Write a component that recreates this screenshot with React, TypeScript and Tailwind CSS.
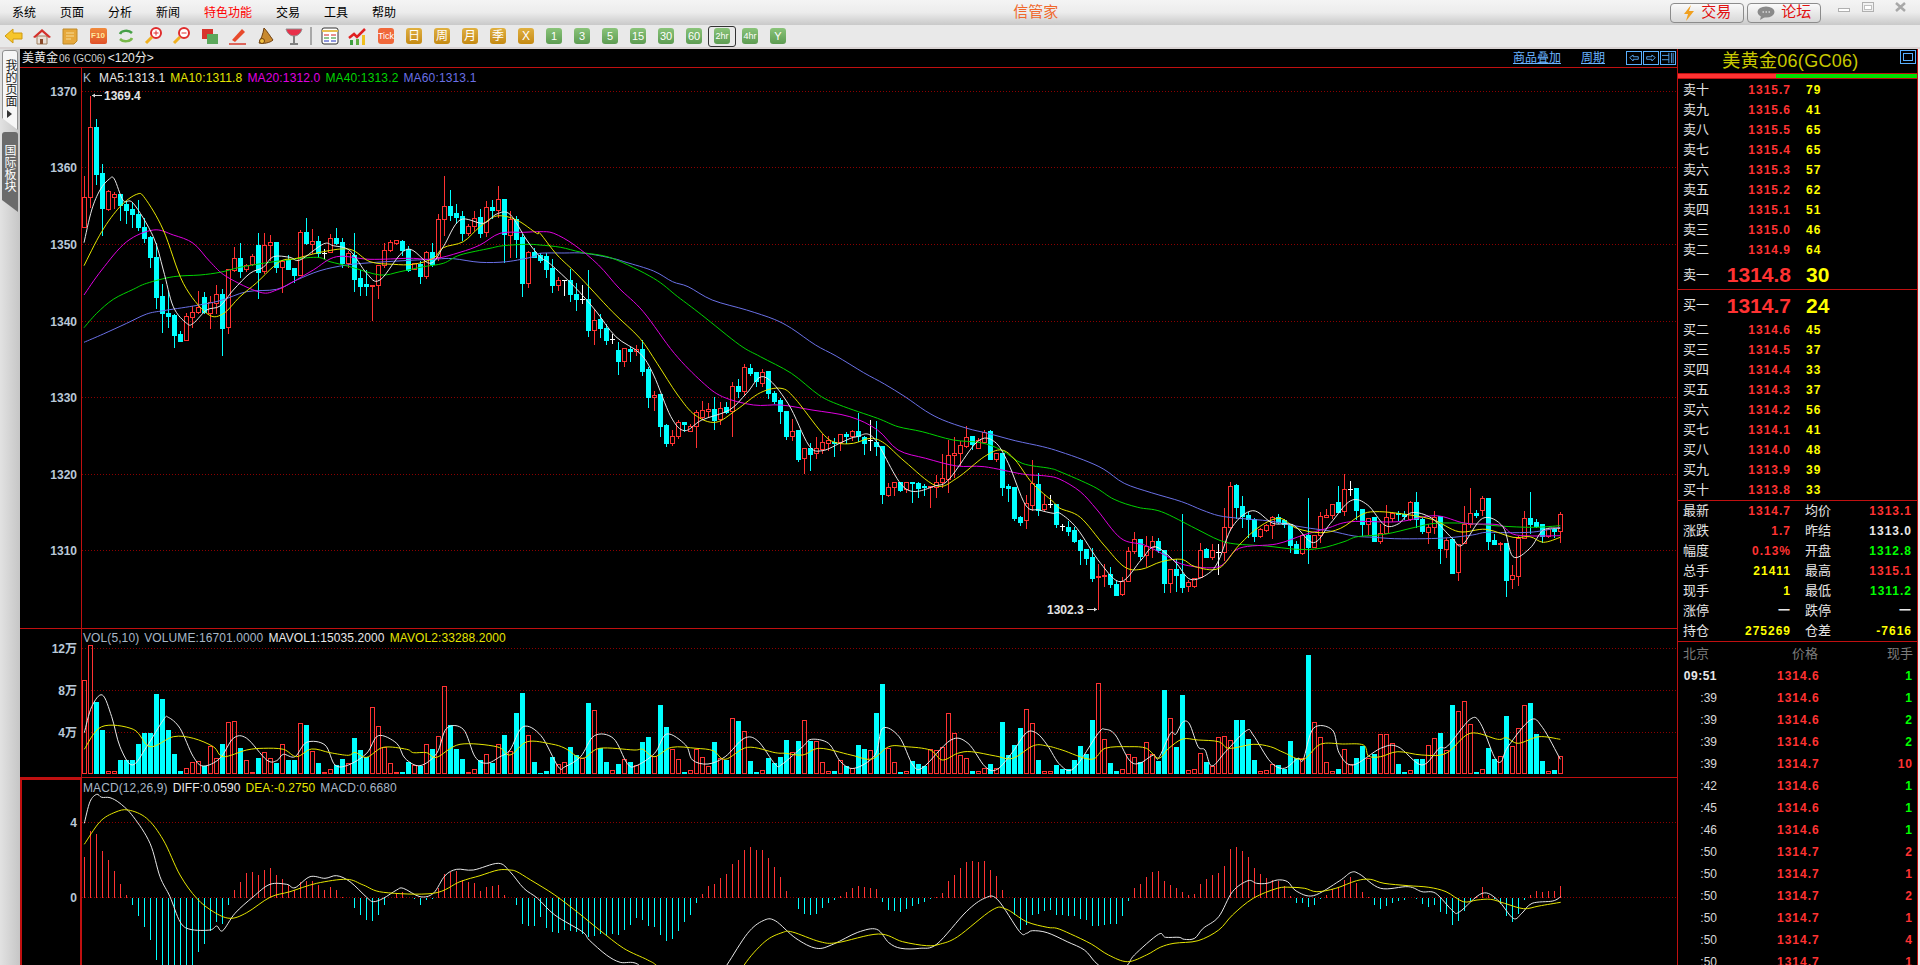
import type { ReactNode } from 'react'

// ---- chart data, read off the picture: [x, y] pairs per zoom section, converted to page px
type Pt = [number, number]
const sec7 = (a: number[]) => conv(a, 60, 3, 60)
const sec8 = (a: number[]) => conv(a, 540, 2.904, 220)
const sec9 = (a: number[]) => conv(a, 1060, 2.958, 420)
const secV6 = (a: number[]) => conv(a, 0, 3, 610)
const secV10 = (a: number[]) => conv(a, 510, 2.904, 640)
const secV11 = (a: number[]) => conv(a, 1050, 2.904, 640)

function conv(a: number[], x0: number, xs: number, y0: number): Pt[] {
  const out: Pt[] = []
  for (let i = 0; i < a.length; i += 2) out.push([x0 + a[i] / xs, y0 + a[i + 1] / 3])
  return out
}

// smooth line through the points
function linePath(pts: Pt[]) {
  let d = `M${pts[0][0].toFixed(1)} ${pts[0][1].toFixed(1)}`
  for (let i = 0; i < pts.length - 1; i++) {
    const p0 = pts[Math.max(0, i - 1)]
    const p1 = pts[i]
    const p2 = pts[i + 1]
    const p3 = pts[Math.min(pts.length - 1, i + 2)]
    const c1x = p1[0] + (p2[0] - p0[0]) / 6
    const c1y = p1[1] + (p2[1] - p0[1]) / 6
    const c2x = p2[0] - (p3[0] - p1[0]) / 6
    const c2y = p2[1] - (p3[1] - p1[1]) / 6
    d += `C${c1x.toFixed(1)} ${c1y.toFixed(1)} ${c2x.toFixed(1)} ${c2y.toFixed(1)} ${p2[0].toFixed(1)} ${p2[1].toFixed(1)}`
  }
  return d
}

const ma60 = [
  ...sec7([72,847,130,822,200,790,260,762,310,752,400,738,480,722,560,695,650,688,710,660,780,632,860,615,950,607,1050,601,1130,597,1180,596,1260,607,1340,605,1420,590]),
  ...sec8([0,100,70,99,130,100,210,115,250,127,330,153,385,185,430,200,500,240,600,270,680,298,730,325,800,375,860,408,940,458,1000,492,1060,530,1120,573,1170,600,1240,625,1300,640,1380,662,1460,680]),
  ...sec9([0,95,70,120,130,148,190,190,270,218,360,245,420,270,470,287,530,295,620,303,680,315,740,325,800,333,870,348,930,352,990,356,1080,356,1150,353,1220,345,1260,337,1320,338,1400,336,1480,322]),
]
const ma40 = [
  ...sec7([72,803,110,760,160,718,220,688,260,670,340,650,420,645,480,637,540,622,610,610,680,600,770,592,810,605,870,620,960,645,1020,635,1090,620,1150,610,1200,585,1290,565,1330,557,1400,553]),
  ...sec8([0,75,60,82,120,97,210,115,330,175,400,230,470,285,580,375,640,410,730,460,810,525,870,555,980,595,1040,620,1110,635,1200,660,1280,668,1340,690,1400,730,1480,745]),
  ...sec9([0,155,100,200,160,238,230,262,300,275,400,325,470,360,520,372,610,378,700,388,770,385,840,365,880,350,960,343,1050,322,1110,310,1200,310,1300,318,1400,322,1480,317]),
]
const ma20 = [
  ...sec7([72,705,125,630,200,545,280,510,340,525,400,550,450,605,500,650,600,697,650,690,700,665,760,630,830,590,930,598,1050,595,1120,597,1200,577,1260,555,1320,520,1390,517]),
  ...sec8([0,35,40,40,100,75,170,135,230,205,300,275,390,400,470,485,530,530,620,555,700,555,790,570,900,590,980,630,1040,690,1120,715,1210,738,1290,740,1400,762,1470,768]),
  ...sec9([0,178,60,215,110,270,180,355,250,375,310,405,370,435,470,440,530,385,640,372,720,345,790,325,860,305,1000,305,1110,287,1200,310,1300,315,1350,345,1480,347]),
]
const ma10 = [
  ...sec7([72,617,125,515,180,440,230,403,255,415,310,510,370,670,440,760,487,763,540,710,590,668,640,620,670,600,710,595,790,575,870,568,930,605,1000,613,1060,613,1120,595,1150,563,1210,545,1260,500,1310,468,1370,480,1430,520]),
  ...sec8([0,40,50,105,110,165,210,275,290,355,340,430,400,525,450,585,510,607,570,570,640,518,700,505,740,535,820,640,860,668,910,670,960,655,1000,670,1060,725,1150,797,1210,775,1290,710,1340,690,1380,720,1430,790,1490,845]),
  ...sec9([0,265,60,292,130,375,190,440,240,448,300,425,360,418,400,440,470,445,530,375,590,320,650,295,700,325,770,338,830,325,890,285,930,275,1000,280,1100,298,1180,335,1260,328,1340,352,1390,350,1430,367,1480,352]),
]
const ma5 = [
  ...sec7([72,548,95,450,120,390,148,357,163,357,190,422,220,430,280,530,310,630,340,740,380,790,400,790,440,750,480,738,520,690,570,640,610,622,640,590,690,592,720,600,790,552,820,557,870,572,920,640,960,660,1040,568,1110,610,1150,560,1200,480,1270,490,1310,462,1350,463,1400,540]),
  ...sec8([0,110,30,132,100,200,160,270,220,350,290,400,330,465,380,590,420,632,470,600,550,570,600,520,650,470,720,550,780,675,820,692,880,665,920,650,970,655,1060,805,1150,797,1190,775,1270,665,1320,665,1360,730,1410,855,1450,870,1490,880]),
  ...sec9([0,280,50,325,120,430,180,485,240,420,280,380,340,425,385,478,440,460,470,420,510,320,570,272,630,310,690,315,750,368,800,310,860,242,910,255,960,315,1000,312,1040,278,1100,295,1160,355,1190,375,1250,295,1310,320,1340,410,1390,385,1430,330,1480,325]),
]

const mavol1 = [
  ...secV6([253,368,275,290,307,255,335,320,360,410,397,465,440,410,490,330,505,322,540,355,580,440,610,468,660,445,700,385,740,385,800,450,830,452,850,433,885,440,920,397,975,405,1005,465,1045,465,1100,430,1135,377,1190,400,1215,445,1260,467,1310,430,1340,355,1390,358,1425,440,1460,460,1500,440]),
  ...secV10([0,330,38,260,90,287,140,380,160,380,205,350,245,287,300,295,340,370,365,378,420,340,455,282,510,315,530,360,575,372,625,350,680,295,720,303,770,373,790,373,850,320,875,298,925,310,960,365,1000,385,1060,345,1082,265,1130,290,1170,375,1200,382,1280,300,1330,310,1380,380,1415,388,1460,335,1500,278,1530,280,1560,315]),
  ...secV11([30,375,70,385,140,280,160,268,190,285,230,360,260,370,300,345,315,355,350,280,365,283,385,247,405,252,430,320,450,330,470,378,510,335,570,272,590,285,640,365,680,385,720,355,735,360,765,265,820,270,840,340,880,375,960,325,1010,320,1080,375,1130,325,1155,318,1220,238,1250,250,1290,350,1310,365,1330,320,1395,240,1430,262,1482,358]),
]
const mavol2 = [
  ...secV6([253,418,305,350,400,358,450,410,520,380,580,385,640,410,670,440,740,420,790,415,850,418,890,440,935,417,990,428,1045,436,1065,427,1100,442,1150,412,1220,418,1240,428,1280,428,1310,442,1380,403,1490,410]),
  ...secV10([0,345,50,305,120,312,160,325,210,355,260,325,360,330,385,328,420,350,470,322,540,325,590,332,625,358,690,322,770,338,800,340,850,345,900,325,990,345,1050,357,1100,320,1150,320,1220,330,1255,360,1300,340,1340,335,1410,348,1460,355,1520,317,1560,318]),
  ...secV11([35,330,120,358,160,325,230,320,280,325,315,355,345,325,385,297,430,300,490,305,520,325,590,313,640,320,680,338,735,358,785,313,850,312,910,315,925,348,960,350,1010,335,1080,345,1150,340,1220,280,1300,298,1325,293,1360,310,1420,290,1482,298]),
]
const diff = [
  ...secV6([253,640,270,575,290,553,305,562,330,563,360,580,400,620,450,700,480,800,510,860,540,935,570,958,630,960,650,948,668,962,705,910,760,860,810,823,860,823,885,833,930,800,975,805,1010,797,1050,815,1100,862,1120,875,1150,865,1190,840,1210,835,1260,860,1300,850,1335,797,1370,778,1420,780,1495,760]),
  ...secV10([0,695,40,745,80,775,130,825,210,875,230,900,280,945,320,967,370,972,430,1030,590,1040,630,975,690,880,735,842,770,842,830,895,890,925,940,912,1010,877,1065,868,1100,908,1135,925,1190,925,1240,912,1325,815,1378,775,1415,778,1480,875,1500,880,1517,872,1560,878]),
  ...secV11([50,905,100,930,130,965,155,985,190,1000,225,975,245,945,315,883,335,892,375,892,390,898,420,895,445,865,490,830,530,755,575,722,600,730,630,730,660,720,690,725,715,753,765,767,840,723,875,697,900,703,960,745,1040,740,1080,755,1120,760,1170,813,1190,815,1255,760,1300,780,1345,835,1370,820,1400,790,1460,783,1483,770]),
]
const dea = [
  ...secV6([253,703,300,635,345,607,385,600,440,625,490,690,540,795,590,865,640,905,690,925,740,908,810,862,870,845,950,820,1040,808,1090,825,1150,847,1300,850,1380,815,1440,797,1495,780]),
  ...secV10([0,690,20,695,60,720,130,765,200,820,260,870,330,925,400,960,430,980,520,1060,640,1060,680,975,740,905,790,878,820,876,900,905,950,908,1070,882,1140,905,1210,917,1250,912,1300,890,1400,810,1440,807,1500,845,1560,862]),
  ...secV11([20,865,60,882,120,912,170,945,225,965,280,945,320,922,360,910,430,902,490,870,530,825,590,775,660,745,700,742,740,745,775,755,830,745,890,722,930,718,970,730,1040,737,1100,742,1150,755,1200,785,1240,780,1280,778,1320,790,1375,806,1420,798,1483,787]),
]

// candles: z colour bodyTop bodyBottom high low, in zoom units of each section
const candles7 = `72 r 410 500 345 500
90 r 202 410 105 440
108 c 202 342 175 372
126 c 340 445 310 525
144 r 394 446 388 450
162 r 402 410 392 445
180 c 403 435 403 480
198 c 432 450 420 490
216 c 447 462 425 500
234 c 462 500 418 510
252 c 500 533 470 545
270 c 530 590 525 620
288 c 590 710 545 745
306 c 708 758 670 815
324 c 758 768 690 800
342 c 765 825 760 860
360 c 822 842 810 842
378 r 768 840 755 840
396 r 755 770 735 800
414 r 740 755 690 760
432 c 712 755 693 760
450 r 725 760 705 805
468 r 703 730 672 760
486 c 703 803 685 885
505 r 628 800 628 820
523 r 595 630 558 632
541 c 595 632 546 650
559 r 615 628 608 632
577 r 588 612 580 615
595 c 556 635 517 715
613 r 556 632 517 640
631 r 546 556 522 600
649 c 546 620 544 635
667 r 602 622 602 695
685 c 600 626 582 628
703 c 624 645 620 665
721 r 517 645 506 645
739 c 517 550 470 552
757 r 544 552 505 580
775 c 544 578 525 590
793 w 578 578 565 595
811 r 535 575 518 575
829 c 535 550 500 552
847 c 546 610 530 622
865 r 580 608 570 620
883 c 585 656 517 692
901 c 655 677 628 705
919 c 672 677 628 705
937 r 674 674 674 780
955 r 614 674 614 713
973 r 570 615 546 620
991 r 546 570 538 572
1009 r 541 550 538 552
1027 c 543 570 536 585
1045 c 568 630 556 632
1063 r 610 626 606 628
1081 c 612 648 600 668
1099 r 576 648 570 655
1117 c 576 612 546 618
1135 r 478 590 460 600
1153 r 439 478 345 525
1171 c 438 465 388 480
1189 c 460 470 430 490
1207 c 468 518 450 540
1225 r 498 518 490 525
1243 r 475 498 450 510
1261 c 472 518 445 530
1279 r 442 517 420 528
1297 c 441 450 418 475
1315 r 418 450 375 470
1333 c 418 522 415 607
1351 r 478 524 450 590
1369 c 478 537 465 590
1387 c 530 668 520 707
1405 r 577 668 570 680
1423 c 576 590 560 592`

const candles8 = `2 c 105 120 96 125
18 c 107 147 95 170
36 c 145 195 115 215
53 r 181 194 168 210
71 w 180 180 180 225
88 c 180 222 145 243
106 c 222 236 185 270
123 w 236 236 192 250
141 c 237 330 148 348
158 r 300 330 265 372
176 c 297 324 280 352
193 c 323 360 310 372
210 w 357 357 338 368
228 c 390 423 362 462
245 r 385 423 385 438
263 c 387 392 378 423
280 r 388 392 372 405
297 c 388 452 358 465
315 c 447 530 437 562
332 r 525 530 510 570
350 c 522 617 522 648
367 c 615 668 610 678
385 r 647 668 628 675
402 r 607 647 598 655
419 c 607 612 607 632
437 r 617 632 610 632
454 r 577 617 568 680
472 r 570 590 540 595
489 r 567 572 547 590
507 c 567 600 528 628
524 r 565 598 542 612
541 c 562 575 543 578
559 r 499 574 483 647
576 c 498 513 474 530
594 r 441 513 430 525
611 c 445 458 428 465
628 c 457 483 452 497
646 r 455 488 445 497
664 c 454 520 454 535
681 c 520 543 510 548
698 c 540 572 530 608
716 c 572 647 572 657
733 r 632 648 595 660
750 c 630 716 630 722
768 r 685 715 685 758
785 c 685 701 665 750
803 r 685 700 648 715
820 r 667 687 640 700
838 r 661 670 645 690
856 c 665 667 650 707
873 r 643 665 640 690
890 c 643 647 632 670
907 r 634 647 628 660
925 c 633 648 575 662
942 c 650 668 645 703
960 w 660 660 598 690
977 c 666 677 600 705
994 c 677 823 677 850
1012 r 800 825 785 827
1029 r 787 800 783 825
1047 c 787 810 785 812
1064 r 787 806 785 815
1082 c 785 790 785 845
1099 c 790 803 783 832
1117 c 797 799 790 825
1134 r 797 797 797 860
1152 r 787 800 762 830
1169 r 775 787 700 800
1186 r 706 778 658 815
1204 r 700 706 648 770
1221 r 675 698 660 735
1238 r 650 677 615 680
1256 c 648 672 645 688
1273 r 660 685 650 685
1291 r 635 665 628 665
1308 c 633 716 628 716
1326 r 699 716 695 722
1343 c 700 800 695 825
1361 c 797 803 790 842
1378 c 802 893 800 900
1396 c 890 905 885 915
1413 r 850 900 822 925
1430 r 790 855 718 870
1448 c 792 870 757 885
1465 r 852 868 822 870
1482 w 851 851 822 862
1500 c 852 912 850 920`

const candles9 = `6 w 318 318 310 330
24 c 321 333 300 345
42 c 330 363 318 365
60 c 360 390 355 432
78 c 387 413 385 432
95 c 411 473 380 482
113 r 469 472 430 568
131 r 464 469 430 498
149 c 462 492 437 500
167 c 492 524 480 525
185 r 482 522 468 524
202 r 394 482 378 482
220 r 358 394 333 400
238 c 358 408 355 418
256 r 378 405 345 437
273 r 364 380 345 410
291 c 364 390 350 395
309 c 390 488 390 515
326 r 448 488 448 515
344 c 447 464 415 512
362 c 462 500 280 515
380 r 487 499 478 513
397 r 473 497 470 500
415 r 390 472 365 472
433 c 388 410 380 412
451 r 391 410 370 418
468 w 395 395 368 462
486 r 322 395 262 420
504 r 198 322 183 330
521 c 195 262 190 295
539 c 258 288 225 322
557 c 285 298 272 350
575 c 297 348 290 362
593 r 328 347 320 350
611 r 315 330 308 332
628 r 292 315 285 353
646 c 292 305 280 310
664 c 300 312 295 320
682 c 312 375 312 395
699 c 372 398 360 400
717 r 345 398 340 402
735 c 345 382 232 428
753 r 345 380 345 382
770 r 289 345 272 365
788 r 286 290 265 292
806 r 253 286 250 295
824 c 246 275 195 275
842 r 208 272 160 285
859 w 206 206 180 225
877 c 204 270 200 298
895 c 268 312 268 345
913 r 295 312 290 342
931 c 292 362 292 362
948 r 338 362 310 368
966 r 292 338 252 340
984 r 279 293 272 302
1002 c 279 283 270 300
1020 c 282 288 270 298
1037 r 246 298 240 300
1055 c 246 298 213 320
1073 c 298 332 290 340
1091 r 322 335 310 368
1108 r 290 322 270 340
1126 c 288 383 285 428
1144 r 360 386 352 410
1162 c 356 458 348 458
1179 r 372 457 372 480
1197 r 313 370 255 370
1215 r 280 313 202 322
1233 c 280 286 268 290
1250 r 235 270 225 285
1268 c 233 362 230 388
1286 c 360 372 340 372
1304 r 370 370 362 390
1321 c 370 480 370 528
1339 r 466 478 432 505
1357 r 354 467 345 495
1375 r 295 355 270 355
1393 c 295 312 213 340
1410 c 307 318 295 322
1428 c 312 348 310 365
1446 r 327 347 320 350
1464 c 327 332 322 350
1482 r 283 332 273 365`

function parseCandles(src: string, x0: number, xs: number, y0: number) {
  return src.split('\n').map((row) => {
    const [z, col, t, b, h, l] = row.trim().split(' ')
    const x = 84 + 6 * Math.round((x0 + Number(z) / xs - 84) / 6)
    const y = (v: string) => Math.round(y0 + Number(v) / 3) + 0.5
    return { x, col, top: y(t), bot: y(b), hi: y(h), lo: y(l) }
  })
}

const allCandles = [
  ...parseCandles(candles7, 60, 3, 60),
  ...parseCandles(candles8, 540, 2.904, 220),
  ...parseCandles(candles9, 1060, 2.958, 420),
]

// volume bars: + red outline, - cyan fill, in 1/3 px
const volumes = [
  280,385,-215,-133,6,6,-43,-43,-43,-91,-124,-124,-241,-226,-133,-61,-10,15,33,36,-23,82,45,-91,153,156,-79,39,3,-49,63,45,-34,87,-43,-43,150,-148,66,-34,3,12,-27,-46,30,-109,-73,-51,198,141,77,30,3,-7,-37,23,-24,87,-76,111,261,-148,-76,-46,3,12,-42,57,-33,87,-118,66,
  -183,-243,113,-36,-3,-9,-51,26,32,-81,-57,45,-213,188,-77,-36,8,-30,41,-36,24,-96,-111,52,-207,-141,72,41,-6,8,72,47,20,-96,45,-42,164,-159,126,-39,-6,8,-48,-33,-51,-102,62,-99,158,-99,96,32,6,-9,38,-24,14,-87,-75,68,-183,-270,74,32,-6,6,-39,-30,-24,72,69,77,179,119,53,44,-9,6,14,-30,14,-156,-56,-87,-138,191,149,-42,6,
  6,-27,-15,-15,-42,-84,-60,-162,270,101,-33,-9,12,56,47,-36,92,56,-39,-252,164,-82,-237,8,12,59,-36,20,107,110,98,-162,-162,-105,-42,6,8,26,-27,-15,-99,-48,44,-357,152,107,32,6,-15,71,26,-48,-84,45,-60,116,116,89,-30,-6,8,-45,-45,83,104,-122,68,-207,185,215,146,-6,12,-78,-45,50,-174,80,134,203,-213,-120,-39,6,-12,50,
]

// macd bars in 1/3 px, + up red, - down cyan
const macdBars = [
  124,202,193,142,115,82,43,10,-20,-53,-88,-127,-187,-250,-250,-250,-250,-250,-250,-163,-138,-98,-71,-78,-20,25,47,74,77,68,85,90,70,58,40,25,48,52,50,38,25,32,25,4,1,-30,-52,-67,-70,-52,-22,0,12,18,0,-3,-20,-5,-4,30,72,78,80,55,47,45,22,33,35,40,8,0,-20,
  -78,-83,-85,-58,-91,-103,-104,-96,-100,-103,-108,-116,-113,-108,-113,-108,-110,-96,-80,-61,-66,-83,-86,-110,-128,-124,-98,-72,-50,-16,12,36,43,60,73,103,115,145,154,145,145,120,94,64,22,1,-34,-47,-52,-47,-31,-16,-7,7,18,31,36,33,30,28,-13,-35,-40,-43,-33,-25,-18,-12,-3,3,14,50,70,90,108,112,108,112,85,67,25,-1,-50,-95,-82,-50,-48,-40,
  -35,-50,-50,-53,-55,-62,-65,-85,-85,-82,-78,-77,-55,-10,30,42,63,78,82,50,40,31,17,10,13,43,58,70,76,97,148,154,142,124,90,73,60,55,50,35,6,-16,-16,-27,-22,-2,8,28,33,55,63,45,19,3,-22,-34,-25,-16,-10,-7,1,-3,-18,-28,-20,-43,-48,-82,-70,-40,-8,6,33,10,-2,-18,-55,-72,-47,-7,9,21,19,21,21,37,
]

const RED = '#ff3232'
const CYAN = '#00ffff'
const GRID = '#8c0000'
const AXIS = '#c01010'

function GridLine({ y }: { y: number }) {
  return <line x1={82} x2={1677} y1={y} y2={y} stroke={GRID} strokeDasharray="1 2" />
}

function AxisText({ y, children }: { y: number; children: ReactNode }) {
  return (
    <text x={77} y={y + 4} textAnchor="end" fontSize={12} fontWeight={700} fill="#b9c8d8">
      {children}
    </text>
  )
}

function PriceChart() {
  const prices: [string, number][] = [
    ['1370', 91.5], ['1360', 167.5], ['1350', 244.5], ['1340', 321.5], ['1330', 397.5], ['1320', 474.5], ['1310', 550.5],
  ]
  return (
    <svg viewBox="20 68 1657 560" className="block w-[1657px] h-[560px]">
      {prices.map(([t, y]) => <GridLine key={t} y={y} />)}
      {prices.map(([t, y]) => <AxisText key={t} y={y}>{t}</AxisText>)}
      <line x1={81.5} x2={81.5} y1={68} y2={628} stroke={AXIS} />
      <g shapeRendering="crispEdges">
        {allCandles.map((c, i) => {
          if (c.col === 'w') {
            return (
              <g key={i} stroke="#ffffff">
                <line x1={c.x + 0.5} x2={c.x + 0.5} y1={c.hi} y2={c.lo} />
                <line x1={c.x - 2} x2={c.x + 3} y1={c.top} y2={c.top} />
              </g>
            )
          }
          if (c.col === 'r') {
            return (
              <g key={i} stroke={RED} fill="#000">
                <line x1={c.x + 0.5} x2={c.x + 0.5} y1={c.hi} y2={c.lo} />
                <rect x={c.x - 1.5} y={c.top} width={4} height={Math.max(c.bot - c.top, 1)} />
              </g>
            )
          }
          return (
            <g key={i}>
              <line x1={c.x + 0.5} x2={c.x + 0.5} y1={c.hi} y2={c.lo} stroke={CYAN} />
              <rect x={c.x - 2} y={c.top - 0.5} width={5} height={Math.max(c.bot - c.top + 1, 2)} fill={CYAN} />
            </g>
          )
        })}
      </g>
      <path d={linePath(ma60)} fill="none" stroke="#6a70e6" />
      <path d={linePath(ma40)} fill="none" stroke="#00d400" />
      <path d={linePath(ma20)} fill="none" stroke="#e000e0" />
      <path d={linePath(ma10)} fill="none" stroke="#e6e600" />
      <path d={linePath(ma5)} fill="none" stroke="#e8e8e8" />
      <line x1={92} x2={102} y1={95.5} y2={95.5} stroke="#d8d8d8" />
      <path d="M92 95.5l3-2v4z" fill="#d8d8d8" />
      <text x={104} y={100} fontSize={12} fontWeight={700} fill="#e4e4e4">1369.4</text>
      <text x={1047} y={614} fontSize={12} fontWeight={700} fill="#e4e4e4">1302.3</text>
      <line x1={1087} x2={1097} y1={609.5} y2={609.5} stroke="#d8d8d8" />
      <path d="M1097 609.5l-3-2v4z" fill="#d8d8d8" />
    </svg>
  )
}

function VolumeChart() {
  const base = 773.5
  return (
    <svg viewBox="20 629 1657 148" className="block w-[1657px] h-[148px]">
      {[648.5, 690.5, 732.5].map((y) => <GridLine key={y} y={y} />)}
      <AxisText y={649}>12万</AxisText>
      <AxisText y={691}>8万</AxisText>
      <AxisText y={733}>4万</AxisText>
      <line x1={81.5} x2={81.5} y1={629} y2={777} stroke={AXIS} />
      <g shapeRendering="crispEdges">
        {volumes.map((v, i) => {
          const x = 84 + i * 6
          const h = Math.max(Math.round(Math.abs(v) / 3), 1)
          return v > 0 ? (
            <rect key={i} x={x - 1.5} y={base - h} width={4} height={h} fill="none" stroke={RED} />
          ) : (
            <rect key={i} x={x - 2} y={base - h} width={5} height={h + 0.5} fill={CYAN} />
          )
        })}
      </g>
      <path d={linePath(mavol1)} fill="none" stroke="#e8e8e8" />
      <path d={linePath(mavol2)} fill="none" stroke="#e6e600" />
    </svg>
  )
}

function MacdChart() {
  const zero = 897.5
  return (
    <svg viewBox="20 778 1657 187" className="block w-[1657px] h-[187px]">
      {[822.5, zero].map((y) => <GridLine key={y} y={y} />)}
      <AxisText y={823}>4</AxisText>
      <AxisText y={898}>0</AxisText>
      <path d="M21 965V779H81V965" fill="none" stroke={AXIS} strokeWidth={2} />
      <g shapeRendering="crispEdges">
        {macdBars.map((v, i) => {
          const x = 84.5 + i * 6
          const h = Math.round(v / 3)
          return <line key={i} x1={x} x2={x} y1={zero} y2={zero - h} stroke={v > 0 ? RED : CYAN} />
        })}
      </g>
      <path d={linePath(diff)} fill="none" stroke="#e8e8e8" />
      <path d={linePath(dea)} fill="none" stroke="#e6e600" />
    </svg>
  )
}

// ---- toolbar icons
function Gold({ t }: { t: string }) {
  return (
    <span className="flex h-4 w-4 items-center justify-center rounded-[3px] bg-linear-to-b from-[#e0b040] to-[#c58a10] text-[12px] leading-none text-white">
      {t}
    </span>
  )
}

function Green({ t, small }: { t: string; small?: boolean }) {
  return (
    <span className={`flex h-4 w-4 items-center justify-center rounded-[3px] bg-linear-to-b from-[#8ac47a] to-[#5d9c52] leading-none text-white ${small ? 'text-[9px]' : 'text-[11px]'}`}>
      {t}
    </span>
  )
}

function Ico({ children }: { children: ReactNode }) {
  return <svg width="20" height="20" viewBox="0 0 20 20">{children}</svg>
}

const toolIcons: ReactNode[] = [
  <Ico><path d="M1 10l8-7v4h9v6H9v4z" fill="#f6c62c" stroke="#d09a10" /></Ico>,
  <Ico><path d="M5 10h10v8H5z" fill="#e8e0d8" stroke="#a08060" /><path d="M8 13h3v5H8z" fill="#8a4a2a" /><path d="M1 11l9-8 9 8-2 1-7-6-7 6z" fill="#d4302a" /></Ico>,
  <Ico><path d="M3 3h14v12l-3 3H3z" fill="#e6a83c" stroke="#c08a28" /><path d="M6 7h8M6 10h8M6 13h5" stroke="#f8dc98" /></Ico>,
  <span className="flex h-4 w-[17px] items-center justify-center rounded-[2px] bg-linear-to-b from-[#f08a3c] to-[#e0502a] text-[8px] font-bold leading-none text-[#ffe9a0]">F10</span>,
  <Ico><path d="M4 8c1-3 8-5 12-1" fill="none" stroke="#46a046" strokeWidth="2.5" /><path d="M16 12c-1 3-8 5-12 1" fill="none" stroke="#78b84a" strokeWidth="2.5" /></Ico>,
  <Ico><circle cx="12" cy="7" r="5" fill="#fff" stroke="#e02c2c" strokeWidth="2" /><path d="M9.5 7h5M12 4.5v5" stroke="#e02c2c" /><path d="M8 11l-6 6" stroke="#f0b020" strokeWidth="3" /></Ico>,
  <Ico><circle cx="12" cy="7" r="5" fill="#fff" stroke="#e02c2c" strokeWidth="2" /><path d="M9.5 7h5" stroke="#e02c2c" /><path d="M8 11l-6 6" stroke="#f0b020" strokeWidth="3" /></Ico>,
  <Ico><rect x="2" y="3" width="11" height="10" fill="#d8342c" /><rect x="7" y="8" width="11" height="10" fill="#5ca85c" /></Ico>,
  <Ico><path d="M4 14L14 3l3 3L7 16z" fill="#e84a2c" /><path d="M1 18h17" stroke="#d83a2c" strokeWidth="1.5" /></Ico>,
  <Ico><path d="M8 2c3 3 6 8 9 12-3 3-10 4-14 3 2-4 4-9 5-15z" fill="#c88a30" stroke="#704010" /><circle cx="6" cy="15" r="2.5" fill="#f0c040" stroke="#704010" /></Ico>,
  <Ico><path d="M2 3h16c-1 4-4 7-8 7S3 7 2 3z" fill="#e8304a" stroke="#909090" /><path d="M10 10v7M6 18h8" stroke="#808080" strokeWidth="2" /></Ico>,
]

function Toolbar() {
  const rest = ['日', '周', '月', '季', 'X']
  return (
    <div className="flex h-[22px] items-center bg-[#e9e9e9]">
      {toolIcons.map((icon, i) => (
        <span key={i} className="flex w-7 justify-center">{icon}</span>
      ))}
      <span className="ml-[2px] mr-[2px] h-[18px] w-[2px] bg-[#a8a8a8]" />
      <span className="ml-[2px] flex w-7 justify-center">
        <Ico><rect x="2" y="2" width="16" height="16" rx="2" fill="#fff" stroke="#333" /><path d="M2 5h16" stroke="#e8c050" strokeWidth="2" /><path d="M4 9h5M11 9h5" stroke="#d02020" /><path d="M4 12h5M11 12h5" stroke="#209020" /><path d="M4 15h5M11 15h5" stroke="#2030c0" /></Ico>
      </span>
      <span className="flex w-7 justify-center">
        <Ico><path d="M1 12l5-4 3 3 8-8" fill="none" stroke="#e02020" strokeWidth="2.5" /><rect x="2" y="14" width="3" height="5" fill="#40a040" /><rect x="8" y="13" width="3" height="6" fill="#60b040" /><rect x="14" y="9" width="3" height="10" fill="#f0c020" /></Ico>
      </span>
      <span className="flex w-7 justify-center">
        <span className="flex h-4 w-4 items-center justify-center rounded-[3px] bg-[#f0683a] text-[9px] leading-none text-white">Tick</span>
      </span>
      {rest.map((t) => (
        <span key={t} className="flex w-7 justify-center"><Gold t={t} /></span>
      ))}
      {['1', '3', '5', '15', '30', '60'].map((t) => (
        <span key={t} className="flex w-7 justify-center"><Green t={t} /></span>
      ))}
      <span className="flex w-7 justify-center">
        <span className="flex h-[21px] w-[28px] items-center justify-center rounded-[3px] border border-[#333]"><Green t="2hr" small /></span>
      </span>
      <span className="flex w-7 justify-center"><Green t="4hr" small /></span>
      <span className="flex w-7 justify-center"><Green t="Y" /></span>
    </div>
  )
}

function TitleBar() {
  const menus = ['系统', '页面', '分析', '新闻', '特色功能', '交易', '工具', '帮助']
  return (
    <div className="flex h-[25px] items-center bg-linear-to-b from-[#f4f4f4] via-[#ececec] to-[#c9c9c9] pl-3 text-[12px] text-black">
      <div className="flex gap-6">
        {menus.map((m) => (
          <span key={m} className={m === '特色功能' ? 'text-[#ff0000]' : ''}>{m}</span>
        ))}
      </div>
      <span className="ml-[617px] text-[15px] text-[#f0682c]">信管家</span>
      <div className="ml-[612px] flex gap-[3px]">
        <button className="flex h-5 w-[74px] items-center justify-center gap-[6px] rounded-[4px] border border-[#8c8c8c] bg-linear-to-b from-[#fafafa] to-[#d8d8d8] text-[15px] text-[#e01010]">
          <svg width="12" height="16" viewBox="0 0 12 16"><path d="M8 0L1 9h4l-2 7 8-10H6z" fill="#f0a020" /></svg>
          交易
        </button>
        <button className="flex h-5 w-[74px] items-center justify-center gap-[6px] rounded-[4px] border border-[#8c8c8c] bg-linear-to-b from-[#fafafa] to-[#d8d8d8] text-[15px] text-[#e01010]">
          <svg width="18" height="14" viewBox="0 0 18 14"><ellipse cx="9" cy="6" rx="8.5" ry="5.5" fill="#8a8a8a" /><path d="M4 10l-1 4 5-3z" fill="#8a8a8a" /><path d="M5.5 6h1.5M8.5 6H10M11.5 6H13" stroke="#fff" /></svg>
          论坛
        </button>
      </div>
      <div className="ml-[17px] flex h-full items-start">
        <span className="mt-2 h-[4px] w-3 border border-[#b0b0b0] bg-white" />
        <span className="ml-3 mt-[2px] flex h-[10px] w-3 items-center justify-center border border-[#b0b0b0]">
          <span className="h-[5px] w-2 border border-[#c0c0c0] bg-white" />
        </span>
        <svg className="ml-[21px] mt-[2px]" width="11" height="10" viewBox="0 0 11 10"><path d="M1 1l9 8M10 1L1 9" stroke="#a8a8a8" strokeWidth="2.5" /></svg>
      </div>
    </div>
  )
}

function LeftTabs() {
  return (
    <div className="flex w-5 shrink-0 flex-col items-start bg-linear-to-r from-[#e2e2e2] to-[#c6c6c6] pl-[2px] pt-[1px]">
      <div className="relative h-[80px] w-4 rounded-t-[3px] border border-[#909090] bg-[#f6f6f6] [clip-path:polygon(0_0,100%_0,100%_100%,0_85%)]">
        <span className="absolute left-[1px] top-[8px] text-[12px] leading-[12px] text-[#222] [writing-mode:vertical-rl]">我的页面</span>
        <span className="absolute left-[4px] top-[59px] h-0 w-0 border-y-[4px] border-l-[5px] border-y-transparent border-l-[#333]" />
      </div>
      <div className="relative mt-[2px] h-[80px] w-4 rounded-t-[3px] bg-[#6b6b6b] [clip-path:polygon(0_0,100%_0,100%_100%,0_85%)]">
        <span className="absolute left-[1px] top-[12px] text-[12px] leading-[12px] text-white [writing-mode:vertical-rl]">国际板块</span>
      </div>
    </div>
  )
}

function ChartHeader() {
  return (
    <div className="flex h-[19px] items-center border-b border-[#c01010] pl-[2px] text-[12px]">
      <span className="flex items-center text-[#e8e8e8]">
        美黄金<span className="ml-px text-[10px] text-[#d0d0d0]">06 (GC06)</span><span className="ml-[2px]">&lt;120分&gt;</span>
      </span>
      <span className="ml-auto text-[#6ab4ff] underline">商品叠加</span>
      <span className="ml-5 text-[#6ab4ff] underline">周期</span>
      <div className="ml-[21px] mr-px flex gap-px">
        {[
          <path key="l" d="M3 6.5l4-3v2h6v3H7v2z" fill="none" stroke="#5ab0ff" />,
          <path key="r" d="M13 6.5l-4-3v2H3v3h6v2z" fill="none" stroke="#5ab0ff" />,
          <path key="s" d="M1 4h8M1 9h8M9 1v12M12 1v12M14 1v12" fill="none" stroke="#5ab0ff" />,
        ].map((p, i) => (
          <svg key={i} width="16" height="14" viewBox="0 0 16 14" className="border border-[#5ab0ff]">{p}</svg>
        ))}
      </div>
    </div>
  )
}

// ---- right side panel
const asks: [string, string, string][] = [
  ['卖十', '1315.7', '79'], ['卖九', '1315.6', '41'], ['卖八', '1315.5', '65'], ['卖七', '1315.4', '65'], ['卖六', '1315.3', '57'],
  ['卖五', '1315.2', '62'], ['卖四', '1315.1', '51'], ['卖三', '1315.0', '46'], ['卖二', '1314.9', '64'],
]
const bids: [string, string, string][] = [
  ['买二', '1314.6', '45'], ['买三', '1314.5', '37'], ['买四', '1314.4', '33'], ['买五', '1314.3', '37'], ['买六', '1314.2', '56'],
  ['买七', '1314.1', '41'], ['买八', '1314.0', '48'], ['买九', '1313.9', '39'], ['买十', '1313.8', '33'],
]
const Y = 'text-[#ffff00]'
const R = 'text-[#ff3232]'
const G = 'text-[#00ff00]'
const W = 'text-[#e8e8e8]'
const stats: [string, string, string, string, string, string][] = [
  ['最新', '1314.7', R, '均价', '1313.1', R],
  ['涨跌', '1.7', R, '昨结', '1313.0', W],
  ['幅度', '0.13%', R, '开盘', '1312.8', G],
  ['总手', '21411', Y, '最高', '1315.1', R],
  ['现手', '1', Y, '最低', '1311.2', G],
  ['涨停', '一', W, '跌停', '一', W],
  ['持仓', '275269', Y, '仓差', '-7616', Y],
]
const trades: [string, string, string, string][] = [
  ['09:51', '1314.6', '1', G], [':39', '1314.6', '1', G], [':39', '1314.6', '2', G], [':39', '1314.6', '2', G], [':39', '1314.7', '10', R],
  [':42', '1314.6', '1', G], [':45', '1314.6', '1', G], [':46', '1314.6', '1', G], [':50', '1314.7', '2', R], [':50', '1314.7', '1', R],
  [':50', '1314.7', '2', R], [':50', '1314.7', '1', R], [':50', '1314.7', '4', R], [':50', '1314.7', '1', R],
]

function DepthRow({ label, price, qty }: { label: string; price: string; qty: string }) {
  return (
    <div className="flex h-5 items-center pl-[5px]">
      <span className="w-[29px] text-[13px] text-[#e4e4e4]">{label}</span>
      <span className="w-[79px] text-right text-[12px] font-bold tracking-[1px] text-[#ff3232]">{price}</span>
      <span className="ml-[15px] text-[12px] font-bold tracking-[1px] text-[#ffff00]">{qty}</span>
    </div>
  )
}

function BigRow({ label, price, qty, className }: { label: string; price: string; qty: string; className: string }) {
  return (
    <div className={`flex items-center pl-[5px] ${className}`}>
      <span className="w-[29px] text-[13px] text-[#e4e4e4]">{label}</span>
      <span className="w-[79px] text-right text-[21px] font-bold leading-none text-[#ff3232]">{price}</span>
      <span className="ml-[15px] text-[21px] font-bold leading-none text-[#ffff00]">{qty}</span>
    </div>
  )
}

function RightPanel() {
  return (
    <div className="w-[241px] shrink-0 border-x border-[#c01010] bg-black">
      <div className="relative flex h-[24px] items-center justify-center pr-[14px] text-[18px] leading-none tracking-[0.3px] text-[#c8c800]">
        美黄金06(GC06)
        <span className="absolute right-[1px] top-[1px] h-[14px] w-[16px] border border-[#5ab0ff] p-[2px]">
          <span className="block h-full w-full border border-[#5ab0ff]" />
        </span>
      </div>
      <div className="flex h-[6px] border-y border-[#c01010]">
        <div className="w-[98px] bg-[#ff3232]" />
        <div className="flex-1 bg-[#00e000]" />
      </div>
      <div className="pt-px">
        {asks.map(([l, p, q]) => <DepthRow key={l} label={l} price={p} qty={q} />)}
      </div>
      <BigRow label="卖一" price="1314.8" qty="30" className="h-[30px] border-b border-[#c01010]" />
      <BigRow label="买一" price="1314.7" qty="24" className="h-[30px]" />
      {bids.map(([l, p, q]) => <DepthRow key={l} label={l} price={p} qty={q} />)}
      <div className="border-y border-[#c01010]">
        {stats.map(([a, av, ac, b, bv, bc]) => (
          <div key={a} className="flex h-5 items-center pl-[5px] text-[12px] font-bold tracking-[1px]">
            <span className="w-[29px] text-[13px] font-normal tracking-normal text-[#e4e4e4]">{a}</span>
            <span className={`w-[79px] text-right ${ac}`}>{av}</span>
            <span className="ml-[14px] w-[29px] text-[13px] font-normal tracking-normal text-[#e4e4e4]">{b}</span>
            <span className={`w-[78px] text-right ${bc}`}>{bv}</span>
          </div>
        ))}
      </div>
      <div className="flex h-[23px] items-center pl-[5px] pr-1 text-[13px] text-[#7c7c7c]">
        <span>北京</span>
        <span className="ml-[83px]">价格</span>
        <span className="ml-auto">现手</span>
      </div>
      {trades.map(([t, p, q, c], i) => (
        <div key={i} className="flex h-[22px] items-center text-[12px]">
          <span className={`w-[39px] text-right ${i === 0 ? 'font-bold tracking-[0.5px] text-[#e8e8e8]' : 'text-[#d8d8d8]'}`}>{t}</span>
          <span className="ml-[60px] w-[43px] font-bold tracking-[1px] text-[#ff3232]">{p}</span>
          <span className={`ml-auto mr-[4px] font-bold tracking-[1px] ${c}`}>{q}</span>
        </div>
      ))}
    </div>
  )
}

export default function App() {
  const kLegend: [string, string][] = [
    ['MA5:1313.1', 'text-[#e8e8e8]'], ['MA10:1311.8', 'text-[#e6e600]'], ['MA20:1312.0', 'text-[#e000e0]'],
    ['MA40:1313.2', 'text-[#00d400]'], ['MA60:1313.1', 'text-[#6a70e6]'],
  ]
  return (
    <div className="flex h-[965px] w-[1920px] flex-col overflow-hidden bg-[#e9e9e9] font-['Liberation_Sans','Noto_Sans_CJK_SC',sans-serif]">
      <TitleBar />
      <Toolbar />
      <div className="h-[2px] bg-[#d8d2d2]" />
      <div className="flex min-h-0 flex-1">
        <LeftTabs />
        <div className="w-[1657px] shrink-0 bg-black">
          <ChartHeader />
          <div className="relative border-b border-[#c01010]">
            <PriceChart />
            <div className="absolute left-[63px] top-[3px] flex gap-[5px] text-[12px] leading-[14px] tracking-[0.15px]">
              <span className="w-[11px] text-[#a8b8c8]">K</span>
              {kLegend.map(([t, c]) => <span key={t} className={c}>{t}</span>)}
            </div>
          </div>
          <div className="relative border-b border-[#c01010]">
            <VolumeChart />
            <div className="absolute left-[63px] top-[2px] flex gap-[5px] text-[12px] leading-[14px] tracking-[0.1px]">
              <span className="text-[#a8b8c8]">VOL(5,10)</span>
              <span className="text-[#a8b8c8]">VOLUME:16701.0000</span>
              <span className="text-[#e8e8e8]">MAVOL1:15035.2000</span>
              <span className="text-[#e6e600]">MAVOL2:33288.2000</span>
            </div>
          </div>
          <div className="relative">
            <MacdChart />
            <div className="absolute left-[63px] top-[3px] flex gap-[5px] text-[12px] leading-[14px] tracking-[0.1px]">
              <span className="text-[#a8b8c8]">MACD(12,26,9)</span>
              <span className="text-[#e8e8e8]">DIFF:0.0590</span>
              <span className="text-[#e6e600]">DEA:-0.2750</span>
              <span className="text-[#a8b8c8]">MACD:0.6680</span>
            </div>
          </div>
        </div>
        <RightPanel />
      </div>
    </div>
  )
}
